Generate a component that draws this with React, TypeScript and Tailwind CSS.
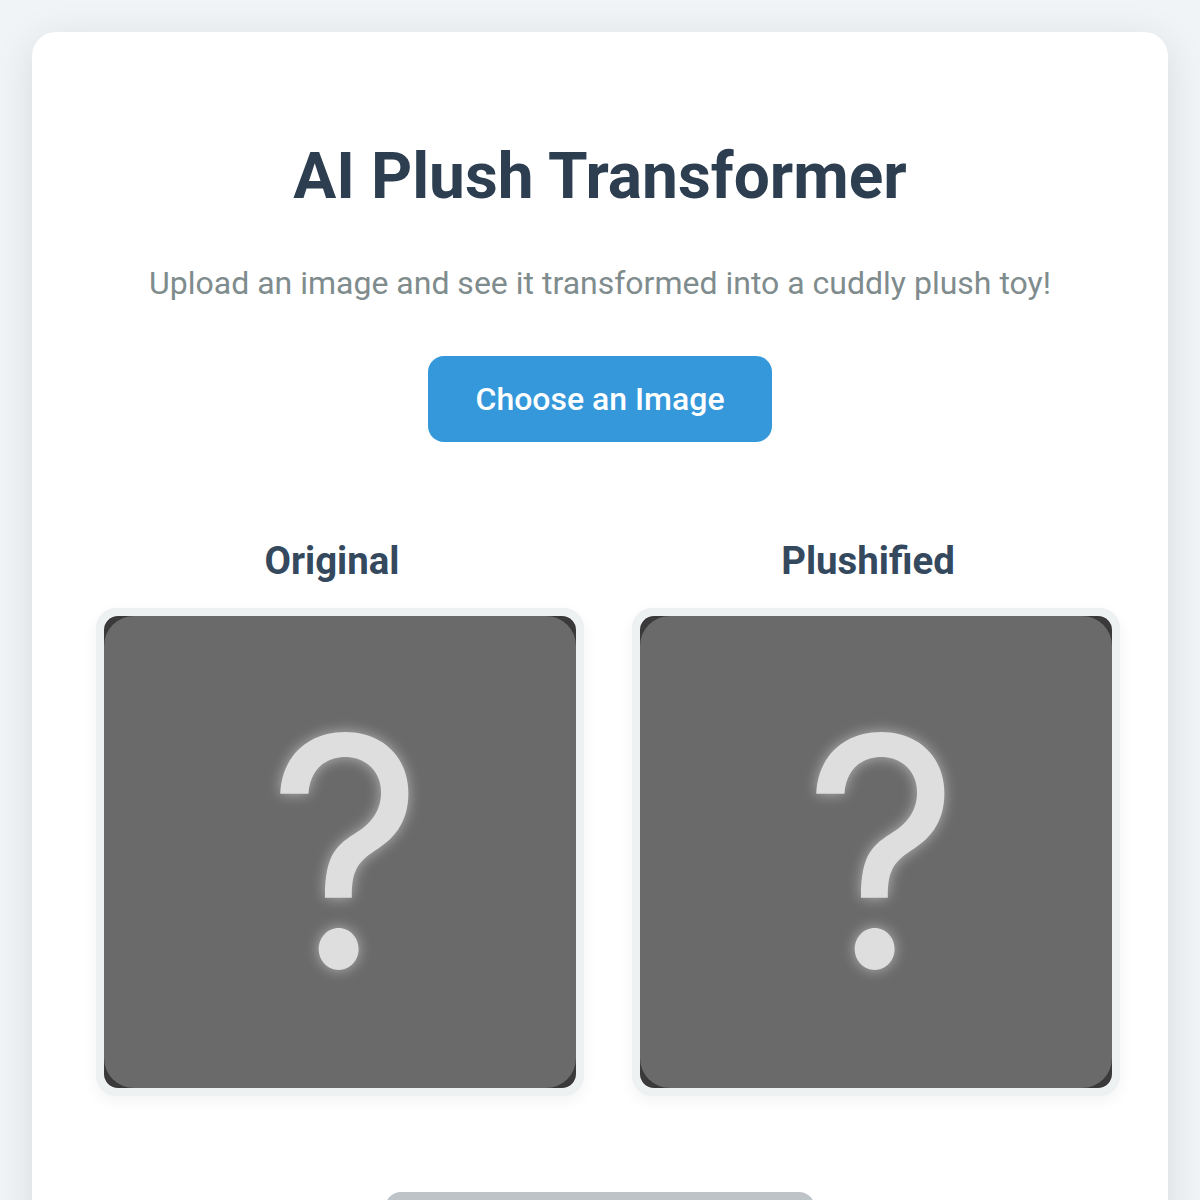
const Placeholder = () => (
  <div className="box-content w-full aspect-square border-8 border-[#eef1f2] rounded-[20px] shadow-[0_5px_15px_rgba(0,0,0,0.05)]">
    <div className="w-full h-full rounded-[14px] bg-[#3a3a3a] overflow-hidden">
      <div className="w-full h-full rounded-[30px] bg-[#6a6a6a] flex items-center justify-center">
        <span className="inline-block ml-[11px] scale-x-95 font-['Inter',sans-serif] font-normal text-[320px] leading-none text-[#dedede] [text-shadow:0_0_14px_rgba(255,255,255,0.5)]">
          ?
        </span>
      </div>
    </div>
  </div>
);

export default function App() {
  return (
    <div className="min-h-screen bg-[#f0f4f7] p-8 font-['Roboto',sans-serif]">
      <div className="bg-white rounded-3xl shadow-[0_8px_40px_rgba(0,0,0,0.1)] px-16 pt-[107px] pb-16 text-center">
        <h1 className="text-[64px] leading-[76px] font-bold text-[#2c3e50] mb-[44px]">AI Plush Transformer</h1>
        <p className="text-[32px] leading-[48px] text-[#7f8c8d] mb-[49px]">
          Upload an image and see it transformed into a cuddly plush toy!
        </p>
        <button className="w-[344px] h-[86px] rounded-2xl bg-[#3498db] text-white text-[32px] font-medium">
          Choose an Image
        </button>
        <div className="grid grid-cols-2 gap-16 mt-[96px]">
          <div>
            <h2 className="text-[38.4px] leading-[46px] font-bold text-[#34495e] mb-[24px]">Original</h2>
            <Placeholder />
          </div>
          <div>
            <h2 className="text-[38.4px] leading-[46px] font-bold text-[#34495e] mb-[24px]">Plushified</h2>
            <Placeholder />
          </div>
        </div>
        <button className="block mx-auto mt-[96px] w-[430px] h-[86px] rounded-2xl bg-[#bdc3c7]" />
      </div>
    </div>
  );
}
